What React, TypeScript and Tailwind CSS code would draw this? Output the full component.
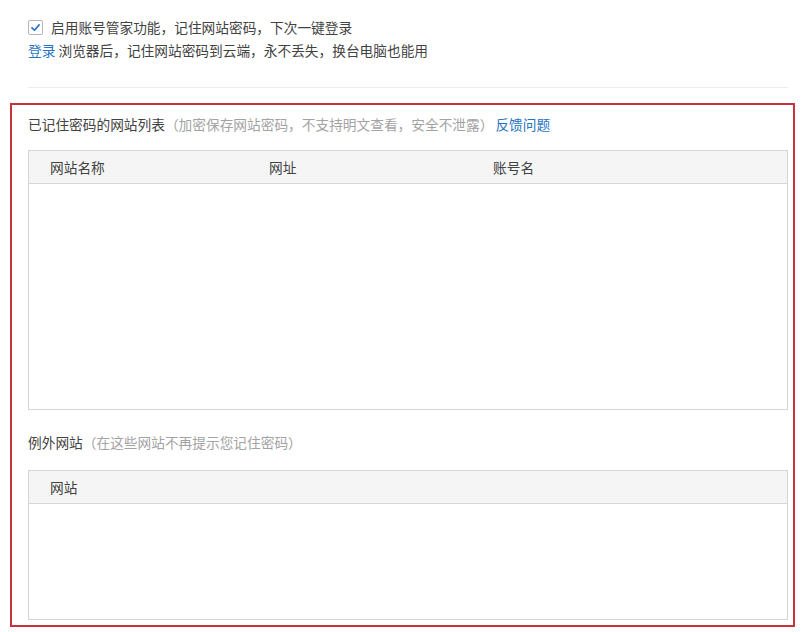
export default function App() {
  return (
    <div
      className="w-[801px] h-[632px] bg-white text-[#424242] text-[13.7px] overflow-hidden"
      style={{ fontFamily: '"Microsoft YaHei", "Noto Sans CJK SC", sans-serif' }}
    >
      <div className="pl-[28px] pt-[17px]">
        <label className="flex items-center h-[20px] leading-[20px]">
          <span className="w-[15px] h-[15px] rounded-[2px] border border-[#b5b5b5] flex items-center justify-center bg-white">
            <svg width="11" height="11" viewBox="0 0 12 12" fill="none">
              <path d="M2.2 6.3 L4.9 9 L9.9 3.2" stroke="#2b78c8" strokeWidth="1.9" strokeLinecap="round" strokeLinejoin="round" />
            </svg>
          </span>
          <span className="ml-[8px]">启用账号管家功能，记住网站密码，下次一键登录</span>
        </label>
        <p className="mt-[3px] h-[20px] leading-[20px]">
          <a className="text-[#2672c4]">登录</a> 浏览器后，记住网站密码到云端，永不丢失，换台电脑也能用
        </p>
      </div>

      <div className="ml-[28px] mt-[27px] w-[760px] border-t border-[#ececec]" />

      <div className="ml-[10px] mt-[15px] w-[785px] h-[524px] border-2 border-[#c8323c] pl-[16px] pt-[9px]">
        <p className="h-[20px] leading-[20px]">
          已记住密码的网站列表
          <span className="text-[#a3a3a3]">（加密保存网站密码，不支持明文查看，安全不泄露）</span>
          <a className="text-[#2672c4] ml-[2px]">反馈问题</a>
        </p>

        <div className="mt-[16px] w-[760px] h-[260px] border border-[#d6d6d6]">
          <div className="h-[33px] bg-[#f5f5f5] border-b border-[#d6d6d6] grid grid-cols-[219px_224px_1fr] pl-[21px] items-center">
            <span>网站名称</span>
            <span>网址</span>
            <span>账号名</span>
          </div>
        </div>

        <p className="mt-[22px] h-[20px] leading-[20px]">
          例外网站
          <span className="text-[#a3a3a3]">（在这些网站不再提示您记住密码）</span>
        </p>

        <div className="mt-[18px] w-[760px] h-[150px] border border-[#d6d6d6]">
          <div className="h-[33px] bg-[#f5f5f5] border-b border-[#d6d6d6] flex pl-[21px] items-center">
            <span>网站</span>
          </div>
        </div>
      </div>
    </div>
  );
}
